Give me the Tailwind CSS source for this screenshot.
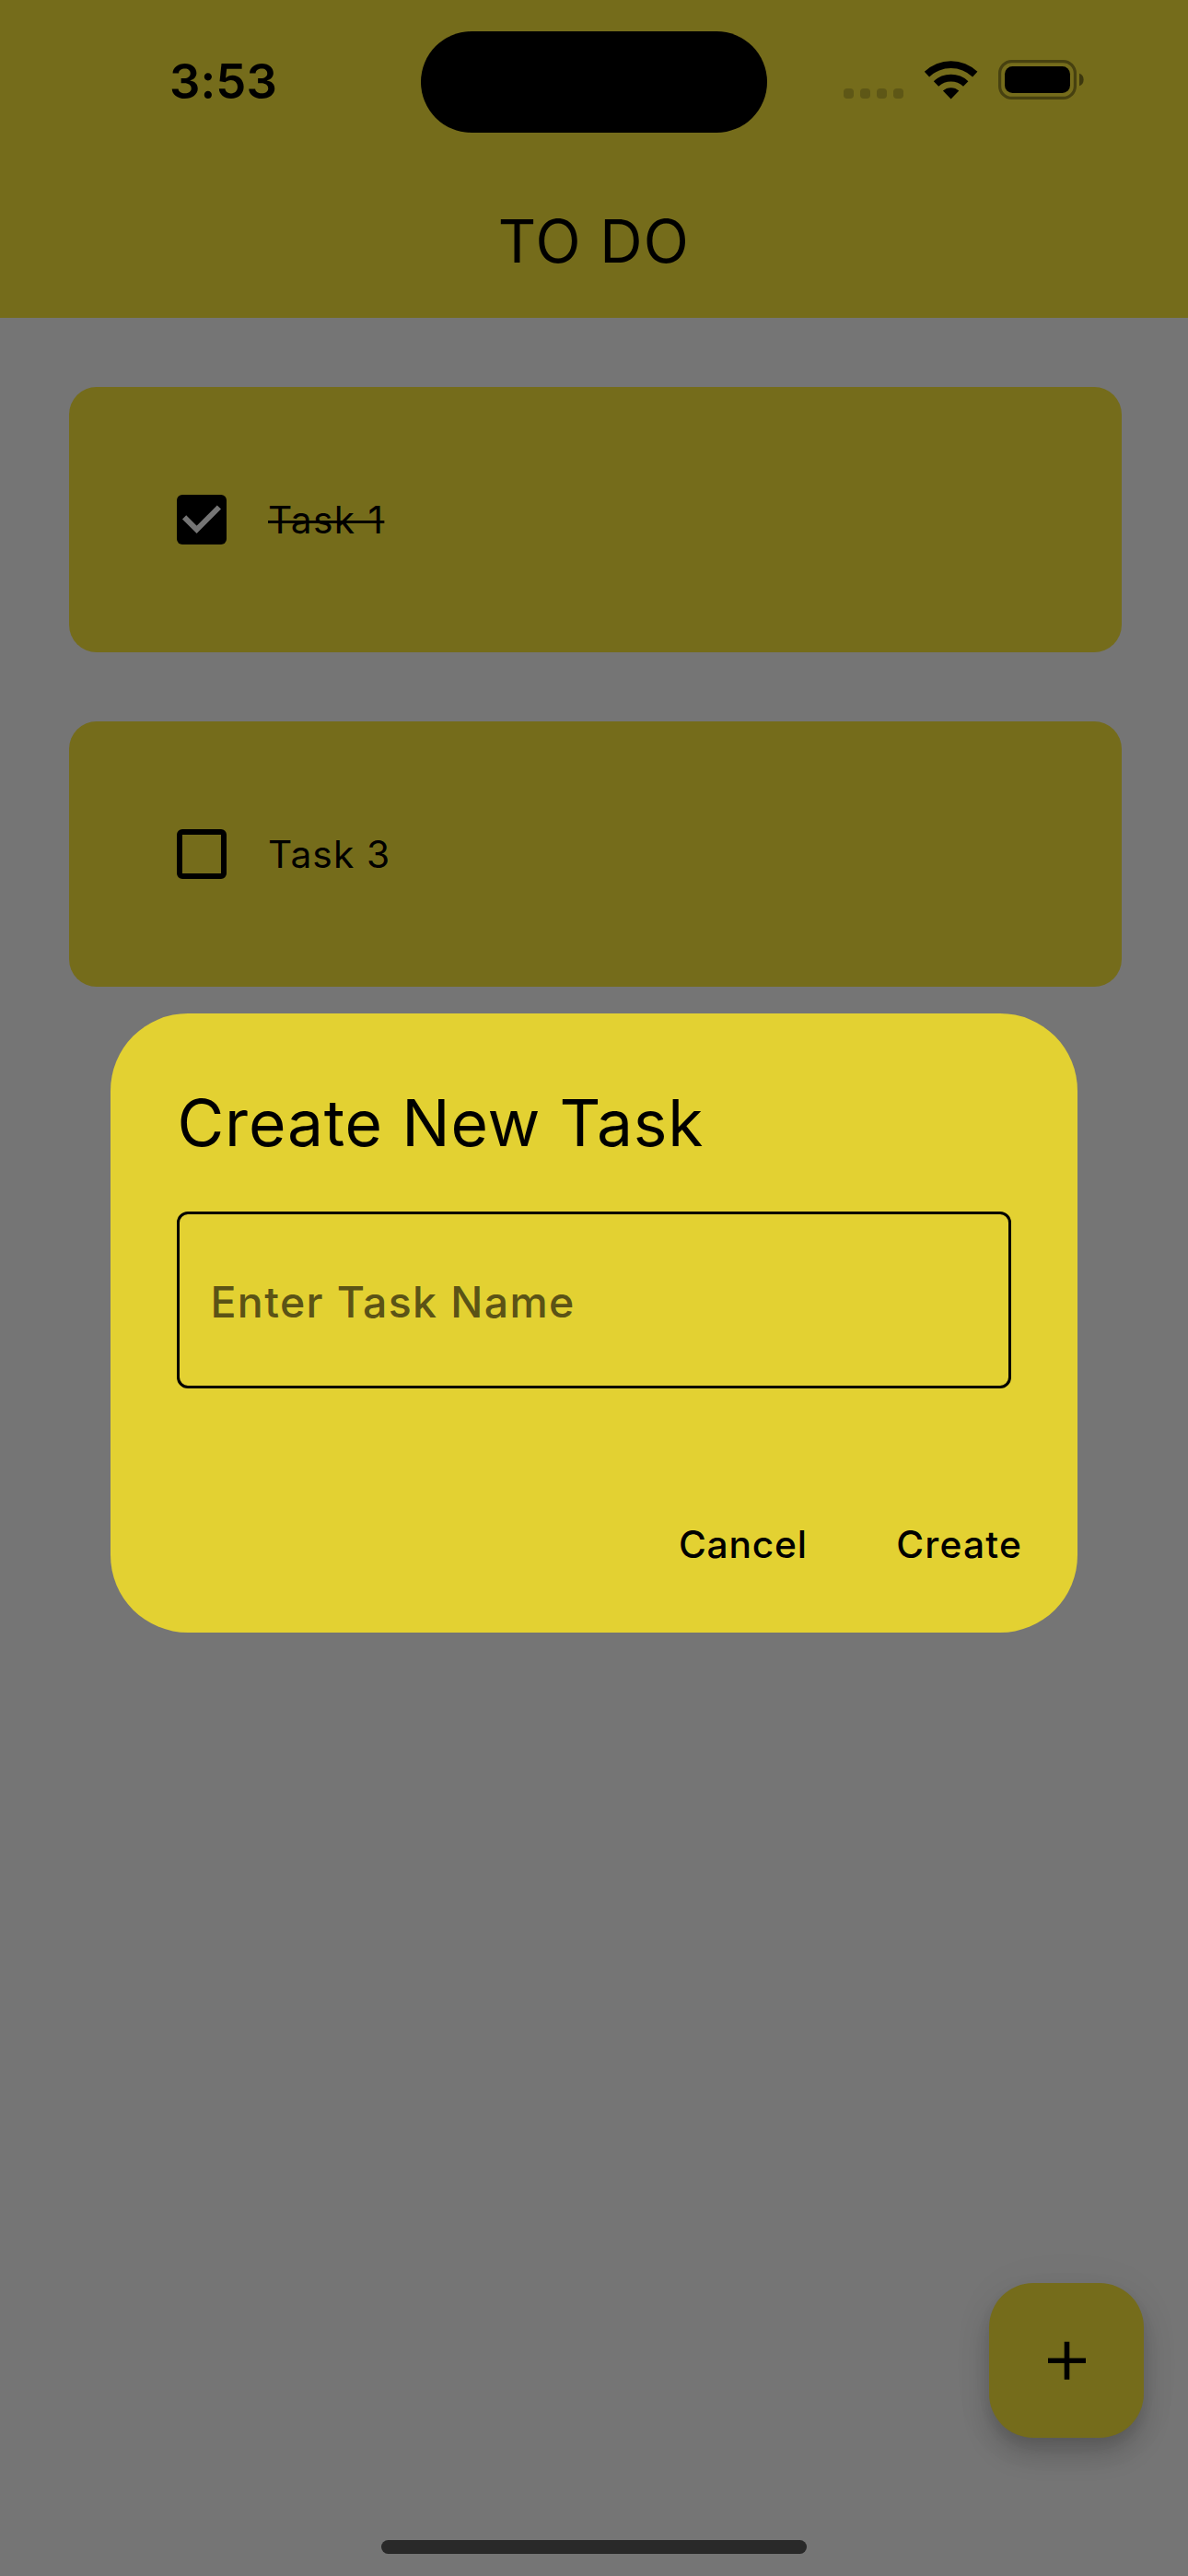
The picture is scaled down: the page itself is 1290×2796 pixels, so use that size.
<!DOCTYPE html>
<html lang="en">
<head>
<meta charset="utf-8">
<title>To Do</title>
<script src="https://cdn.jsdelivr.net/npm/@tailwindcss/browser@4"></script>
</head>
<body class="relative flex h-[2796px] w-[1290px] flex-col overflow-hidden bg-[#757575] font-['Inter',sans-serif] text-black">
  <header class="flex h-[345px] flex-col bg-[#756c1b]">
    <div class="flex h-[177px] items-center">
      <div class="w-[457px] pl-[184px] text-[52.5px] leading-none font-semibold tracking-[0.1px]">3:53</div>
      <div class="mt-[1px] h-[110px] w-[376px] rounded-full bg-black"></div>
      <svg class="ml-[79px] h-[57px] w-[270px]" viewBox="912 60 270 57">
        <g fill="#5e5716">
          <rect x="916" y="96" width="11" height="11" rx="4"/>
          <rect x="934" y="96" width="11" height="11" rx="4"/>
          <rect x="952" y="96" width="11" height="11" rx="4"/>
          <rect x="970" y="96" width="11" height="11" rx="4"/>
        </g>
        <path d="M1003.8 77.8a41.6 41.6 0 0 1 57.6 0l-5.3 5.6a33.9 33.9 0 0 0-47 0zM1013.8 88.2a27.2 27.2 0 0 1 37.6 0l-5.4 5.6a19.4 19.4 0 0 0-26.8 0zM1023.9 98.6a12.8 12.8 0 0 1 17.4 0l-8.7 8.8z"/>
        <rect x="1085.6" y="66.6" width="81.8" height="39.8" rx="13" fill="none" stroke="#474110" stroke-width="3.2"/>
        <rect x="1091" y="72" width="71" height="29" rx="8.5"/>
        <path d="M1172 79.7a7.3 7.3 0 0 1 0 13.6z" fill="#3d380e"/>
      </svg>
    </div>
    <h1 class="flex h-[168px] items-center justify-center pt-[3px] text-[64.2px] tracking-[1.26px]">TO DO</h1>
  </header>

  <main class="flex flex-col gap-[75px] py-[75px] pr-[72px] pl-[75px]">
    <div class="flex h-[288px] items-center gap-[45px] rounded-[30px] bg-[#756c1b] pl-[117px]">
      <svg class="size-[54px]" viewBox="0 0 54 54"><rect width="54" height="54" rx="6"/><path d="M8.1 24.3 21.6 37.8 45.9 13.5" fill="none" stroke="#757575" stroke-width="6"/></svg>
      <span class="pt-[2px] text-[40.7px] tracking-[1.4px] line-through decoration-[2.5px]">Task 1</span>
    </div>
    <div class="flex h-[288px] items-center gap-[45px] rounded-[30px] bg-[#756c1b] pl-[117px]">
      <div class="size-[54px] rounded-[6px] border-6 border-black"></div>
      <span class="pt-[2px] text-[40.7px] tracking-[1.1px]">Task 3</span>
    </div>
  </main>

  <button class="absolute top-[2478px] left-[1074px] flex size-[168px] items-center justify-center rounded-[48px] bg-[#756c1b] shadow-[0_9px_15px_-3px_rgba(0,0,0,0.08),0_18px_30px_rgba(0,0,0,0.18),0_3px_54px_rgba(0,0,0,0.04)]">
    <svg class="size-[72px]" viewBox="0 0 72 72"><path d="M16 33.4h17.7v-17.7h5.6v17.7h17.7v5.6h-17.7v17.7h-5.6v-17.7h-17.7z"/></svg>
  </button>

  <div class="absolute top-[2757px] left-[414px] h-[15px] w-[462px] rounded-full bg-[#292929]"></div>

  <div role="dialog" class="absolute top-[1099.5px] left-[120px] flex h-[672px] w-[1050px] flex-col rounded-[84px] bg-[#e3d132] px-[72px] pt-[71px]">
    <h2 class="pl-[0.5px] text-[69.5px] leading-[96px] tracking-[0.8px]">Create New Task</h2>
    <div class="mt-[48.5px] flex h-[192px] items-center rounded-[12px] border-3 border-black pt-[6px] pl-[33.5px] text-[46.4px] font-medium tracking-[1.4px] text-[#5b5316]">Enter Task Name</div>
    <div class="mt-[140px] -mr-[12px] flex justify-end gap-[96.5px] text-[40.7px] leading-[60px] font-medium">
      <span class="tracking-[0.8px]">Cancel</span>
      <span class="tracking-[1.2px]">Create</span>
    </div>
  </div>
</body>
</html>
